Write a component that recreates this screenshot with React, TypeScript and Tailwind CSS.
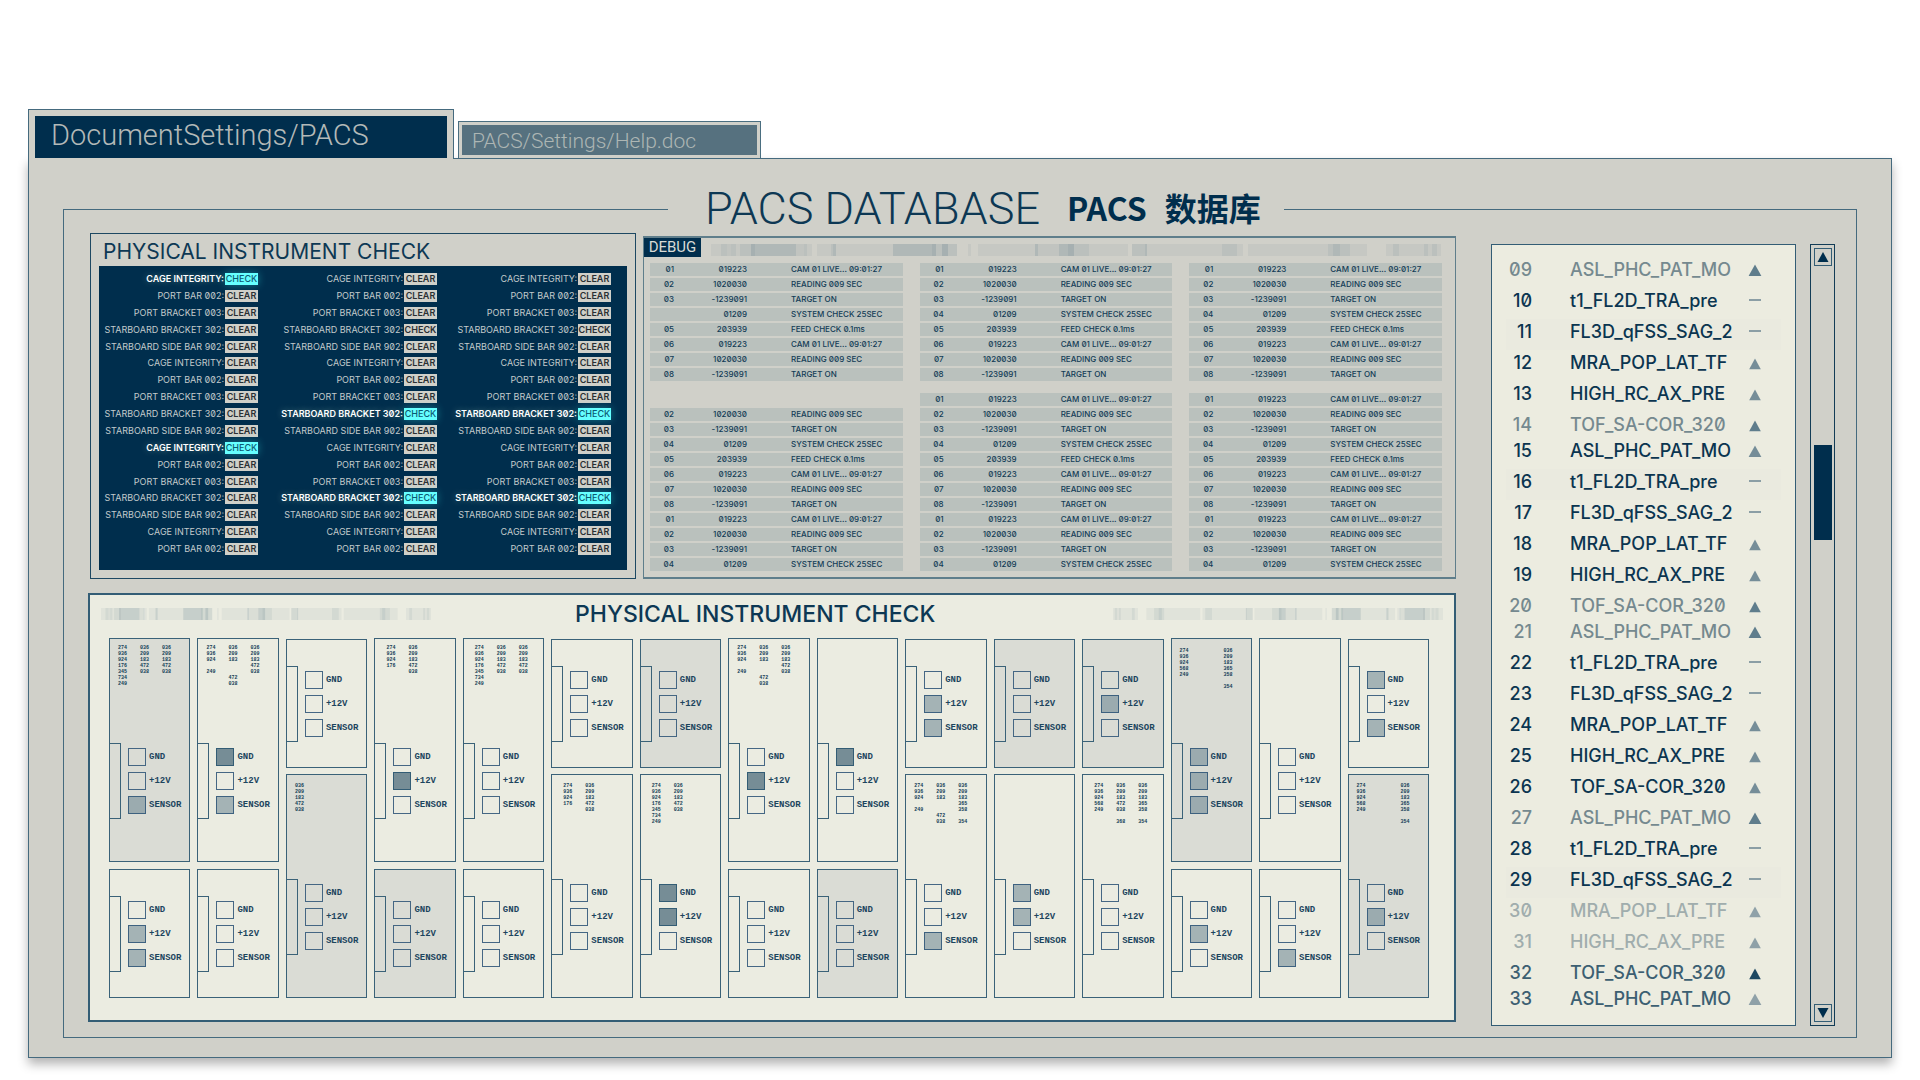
import React from "react";

const INTER = "font-['Inter',sans-serif]";

/* ---------- barcode strip ---------- */

type Bar = [start: number, end: number, shade: number];

const BARS: Bar[] = [
  [0, 10, 1], [10, 16, 3], [16, 20, 2], [20, 25, 3], [25, 29, 1],
  [29, 40, 3], [40, 44, 5], [44, 85, 4], [85, 93, 2], [93, 96, 3], [96, 101, 1],
  [106, 120, 1], [120, 122, 3], [122, 125, 4], [125, 182, 1],
  [182, 221, 4], [221, 225, 5], [225, 231, 3], [231, 237, 5], [237, 246, 3],
  [257, 260, 1], [267, 324, 1], [324, 327, 4], [327, 348, 2], [348, 357, 4],
  [357, 363, 5], [363, 378, 3], [378, 417, 1],
  [421, 434, 3], [434, 436, 4], [436, 511, 1], [511, 526, 3], [526, 532, 1],
  [537, 617, 1], [617, 622, 3], [622, 629, 4], [629, 639, 3], [639, 656, 1],
  [675, 682, 1], [682, 688, 3], [688, 713, 1], [713, 717, 3], [717, 721, 1],
  [721, 726, 3], [726, 730, 1],
];

const SHADE = [0, 0.05, 0.08, 0.11, 0.17, 0.22];

function Barcode({ className, mirrored }: { className: string; mirrored?: boolean }) {
  return (
    <svg viewBox="0 0 730 12" preserveAspectRatio="none" aria-hidden="true" className={className}>
      {BARS.map(([a, b, s]) => (
        <rect key={a} x={mirrored ? 730 - b : a} y="0" width={b - a} height="12" fill="#14405c" opacity={SHADE[s]} />
      ))}
    </svg>
  );
}

/* ---------- instrument check table ---------- */

const CHECKS = ["CAGE INTEGRITY:", "PORT BAR 002:", "PORT BRACKET 003:", "STARBOARD BRACKET 302:", "STARBOARD SIDE BAR 902:"];

function CheckColumn({ alerts, checks }: { alerts: number[]; checks: number[] }) {
  return (
    <ul className="flex flex-col justify-between">
      {Array.from({ length: 17 }, (_, i) => {
        const alert = alerts.includes(i);
        return (
          <li key={i} className="flex items-center justify-end gap-px whitespace-nowrap">
            <span
              className={
                alert
                  ? "font-semibold text-white [text-shadow:0_0_6px_rgba(200,230,200,0.4)]"
                  : "text-[#c3cbcc]"
              }
            >
              {CHECKS[i % 5]}
            </span>
            <span
              className={
                alert
                  ? "w-[33px] bg-[#66ffff] text-center font-medium text-[#0c5a72] shadow-[0_0_8px_rgba(60,255,255,0.35)]"
                  : "w-[33px] bg-[#d0d0c9] text-center font-semibold text-[#2a2f33]"
              }
            >
              {alert || checks.includes(i) ? "CHECK" : "CLEAR"}
            </span>
          </li>
        );
      })}
    </ul>
  );
}

function InstrumentSummary() {
  return (
    <section className="flex w-[546px] flex-none flex-col border border-[#1d4862] px-2 pb-2">
      <h2 className={`${INTER} pt-1 pl-1 text-[21px] leading-7 text-[#0d3854]`}>PHYSICAL INSTRUMENT CHECK</h2>
      <div
        className={`${INTER} grid flex-1 grid-cols-[159px_179px_174px] bg-[#002e4d] pt-[7px] pb-[15px] text-[9px] leading-3 [font-feature-settings:'zero']`}
      >
        <CheckColumn alerts={[0, 10]} checks={[]} />
        <CheckColumn alerts={[8, 13]} checks={[3]} />
        <CheckColumn alerts={[8, 13]} checks={[3]} />
      </div>
    </section>
  );
}

/* ---------- debug log ---------- */

const LOG: [string, string][] = [
  ["019223", "CAM 01 LIVE... 09:01:27"],
  ["1020030", "READING 009 SEC"],
  ["-1239091", "TARGET ON"],
  ["01209", "SYSTEM CHECK 25SEC"],
  ["203939", "FEED CHECK 0.1ms"],
  ["019223", "CAM 01 LIVE... 09:01:27"],
  ["1020030", "READING 009 SEC"],
  ["-1239091", "TARGET ON"],
];

function DebugRow({ index, numbered = true }: { index: number; numbered?: boolean }) {
  const [value, message] = LOG[index];
  return (
    <tr className="h-[13px] bg-[#bac1bd]">
      <td className="w-6 p-0 text-right">{numbered ? `0${index + 1}` : ""}</td>
      <td className="w-[73px] p-0 text-right">{value}</td>
      <td className="p-0 pl-11">{message}</td>
    </tr>
  );
}

function DebugTable({ gaps }: { gaps?: boolean }) {
  return (
    <table className="w-full table-fixed border-separate border-spacing-x-0 border-spacing-y-[2px] text-left whitespace-nowrap">
      <tbody>
        {LOG.map((_, i) => (
          <DebugRow key={i} index={i} numbered={!(gaps && i === 3)} />
        ))}
        <tr className="h-2">
          <td colSpan={3} className="p-0" />
        </tr>
        {LOG.map((_, i) =>
          gaps && i === 0 ? (
            <tr key={i} className="h-[13px]">
              <td colSpan={3} className="p-0" />
            </tr>
          ) : (
            <DebugRow key={i} index={i} />
          ),
        )}
        {LOG.slice(0, 4).map((_, i) => (
          <DebugRow key={i} index={i} />
        ))}
      </tbody>
    </table>
  );
}

function DebugPanel() {
  return (
    <section className="mt-[3px] flex-1 border-x border-y-2 border-[#5f7e8b] pb-1">
      <div className="flex items-start gap-2.5">
        <h2 className="w-[57px] flex-none bg-[#002e4d] text-center font-['Roboto',sans-serif] text-[15px] leading-[19px] text-[#d8dbd6]">
          DEBUG
        </h2>
        <Barcode className="mt-1.5 mr-3.5 h-3 min-w-0 flex-1" />
      </div>
      <div className="mt-1 mr-[13px] ml-1.5 grid grid-cols-3 gap-x-[17px] font-['Inter',sans-serif] text-[8px] leading-[13px] font-medium text-[#123c56] [font-feature-settings:'zero']">
        <DebugTable gaps />
        <DebugTable />
        <DebugTable />
      </div>
    </section>
  );
}

/* ---------- module rack ---------- */

type Level = 0 | 1 | 2;
type Leds = [Level, Level, Level];

interface Module {
  leds: Leds;
  shaded?: boolean;
  codes?: string[][];
  inset?: "a" | "b" | "c";
}

interface Slot {
  tallFirst: boolean;
  tall: Module;
  short: Module;
}

const A7 = ["274", "936", "924", "176", "345", "734", "249"];
const A4 = ["274", "936", "924", "176"];
const AG = ["274", "936", "924", "", "249"];
const A5 = ["274", "936", "924", "568", "249"];
const B5 = ["036", "209", "183", "472", "038"];
const BG = ["036", "209", "183", "", "", "472", "038"];
const B6 = ["036", "209", "183", "472", "038", "", "368"];
const C6 = ["036", "209", "183", "365", "358", "", "354"];

const SLOTS: Slot[] = [
  { tallFirst: true, tall: { leds: [0, 0, 1], shaded: true, codes: [A7, B5, B5], inset: "a" }, short: { leds: [0, 1, 1] } },
  { tallFirst: true, tall: { leds: [2, 0, 1], codes: [AG, BG, B5], inset: "a" }, short: { leds: [0, 0, 0] } },
  { tallFirst: false, short: { leds: [0, 0, 0] }, tall: { leds: [0, 0, 0], shaded: true, codes: [B5], inset: "a" } },
  { tallFirst: true, tall: { leds: [0, 2, 0], codes: [A4, B5], inset: "b" }, short: { leds: [0, 0, 0], shaded: true } },
  { tallFirst: true, tall: { leds: [0, 0, 0], codes: [A7, B5, B5], inset: "b" }, short: { leds: [0, 0, 0] } },
  { tallFirst: false, short: { leds: [0, 0, 0] }, tall: { leds: [0, 0, 0], codes: [A4, B5], inset: "b" } },
  { tallFirst: false, short: { leds: [0, 0, 0], shaded: true }, tall: { leds: [2, 2, 0], codes: [A7, B5], inset: "b" } },
  { tallFirst: true, tall: { leds: [0, 2, 0], codes: [AG, BG, B5], inset: "a" }, short: { leds: [0, 0, 0] } },
  { tallFirst: true, tall: { leds: [2, 0, 0] }, short: { leds: [0, 0, 0], shaded: true } },
  { tallFirst: false, short: { leds: [0, 1, 1] }, tall: { leds: [0, 0, 1], codes: [AG, BG, C6], inset: "a" } },
  { tallFirst: false, short: { leds: [0, 0, 0], shaded: true }, tall: { leds: [1, 1, 0] } },
  { tallFirst: false, short: { leds: [0, 1, 0], shaded: true }, tall: { leds: [0, 0, 0], codes: [A5, B6, C6], inset: "b" } },
  { tallFirst: true, tall: { leds: [1, 1, 1], shaded: true, codes: [A5, [], C6], inset: "c" }, short: { leds: [0, 1, 0] } },
  { tallFirst: true, tall: { leds: [0, 0, 0] }, short: { leds: [0, 0, 1] } },
  { tallFirst: false, short: { leds: [1, 0, 1] }, tall: { leds: [0, 1, 0], shaded: true, codes: [A5, [], C6], inset: "a" } },
];

const LED_NAMES = ["GND", "+12V", "SENSOR"];
const LED_CLASS = [
  "size-[18px] flex-none appearance-none border border-[#33597a]/90",
  "size-[18px] flex-none appearance-none border border-[#33597a]/90 checked:bg-[#4d6f80]/45",
  "size-[18px] flex-none appearance-none border border-[#335d75] checked:bg-[#768d96]",
];
const INSET = { a: "pl-2", b: "pl-[11px]", c: "pl-2 pt-[3px]" };

function ModuleCard({ module, tall, low }: { module: Module; tall?: boolean; low?: boolean }) {
  return (
    <div
      className={`flex flex-col justify-end border border-[#3a6278] ${tall ? "h-56 pb-[42px]" : "h-[129px] pb-[25px]"} ${
        module.shaded ? "bg-[#dadcd5]" : ""
      }`}
    >
      {module.codes && (
        <div
          className={`mb-auto grid grid-cols-[22px_22px_1fr] ${low ? "pt-2" : "pt-1.5"} font-['Liberation_Mono',monospace] text-[5px] leading-[6px] font-bold text-[#123c56]`}
        >
          {module.codes.map((column, c) => (
            <div key={c} className={INSET[module.inset ?? "a"]}>
              {column.map((code, r) => (
                <div key={r} className="h-1.5">
                  {code}
                </div>
              ))}
            </div>
          ))}
        </div>
      )}
      <div className="flex gap-[7px]">
        <div className="-ml-px h-[76px] w-3 flex-none border border-[#3a6278]" />
        <div className="flex flex-col justify-center gap-1.5">
          {LED_NAMES.map((name, i) => (
            <label
              key={name}
              className="flex items-center gap-[3px] font-['Liberation_Mono',monospace] text-[9px] leading-[18px] font-bold text-[#1c455e]"
            >
              <input type="checkbox" defaultChecked={module.leds[i] > 0} className={LED_CLASS[module.leds[i]]} />
              {name}
            </label>
          ))}
        </div>
      </div>
    </div>
  );
}

function ModuleRack() {
  return (
    <section className="mt-3.5 border-2 border-[#335d75] bg-[#ebece1] px-[11px] pb-[22px]">
      <div className="flex h-[43px] items-center pb-1.5">
        <Barcode className="h-3 w-[330px] flex-none" />
        <h2 className={`${INTER} ml-36 text-[23px] leading-8 font-medium text-[#0d3854]`}>PHYSICAL INSTRUMENT CHECK</h2>
        <Barcode className="ml-auto h-3 w-[330px] flex-none" mirrored />
      </div>
      <div className="mr-3.5 ml-2 grid grid-cols-15 gap-x-[7px]">
        {SLOTS.map((slot, i) =>
          slot.tallFirst ? (
            <div key={i} className="flex flex-col gap-[7px]">
              <ModuleCard module={slot.tall} tall />
              <ModuleCard module={slot.short} />
            </div>
          ) : (
            <div key={i} className="flex flex-col gap-1.5 pt-px">
              <ModuleCard module={slot.short} />
              <ModuleCard module={slot.tall} tall low />
            </div>
          ),
        )}
      </div>
    </section>
  );
}

/* ---------- scan list ---------- */

const SCANS = ["ASL_PHC_PAT_MO", "t1_FL2D_TRA_pre", "FL3D_qFSS_SAG_2", "MRA_POP_LAT_TF", "HIGH_RC_AX_PRE", "TOF_SA-COR_320"];
const DIM = [9, 14, 20, 21, 27];
const FAINT = [30, 31];
const SOFT = [32, 33];
const HIGHLIGHT = [11, 16, 29];

function Trend({ n }: { n: number }) {
  const kind = (n - 9) % 6;
  if (kind === 1 || kind === 2) {
    return (
      <svg viewBox="0 0 14 14" aria-hidden="true" className="mx-auto size-3.5">
        <rect x="1" y="5" width="12" height="2" fill="#8b9ea5" />
      </svg>
    );
  }
  const fill = n === 32 ? "#1d4862" : DIM.includes(n) ? "#5f7d8c" : FAINT.includes(n) || n === 33 ? "#8fa1a8" : "#758d98";
  return (
    <svg viewBox="0 0 14 14" aria-hidden="true" className="mx-auto size-3.5">
      <path d={kind === 0 ? "M7 1.5 13.4 13H.6Z" : "M7 2.5 12.8 13.2H1.2Z"} fill={fill} />
    </svg>
  );
}

function ScanRow({ n, last }: { n: number; last: boolean }) {
  const tone = DIM.includes(n)
    ? "text-[#75898f]"
    : FAINT.includes(n)
      ? "text-[#a0adad]"
      : SOFT.includes(n)
        ? "text-[#3c5f72]"
        : "text-[#0b3550]";
  const fill = HIGHLIGHT.includes(n) ? "bg-[#eaeadf]" : "";
  return (
    <tr className={`${tone} ${last ? "h-[26px]" : "h-[31px]"} align-top`}>
      <td className={`w-[26px] p-0 text-right ${fill}`}>{String(n).padStart(2, "0")}</td>
      <td className={`p-0 pl-[38px] ${fill}`}>{SCANS[(n - 9) % 6]}</td>
      <td className={`w-10 p-0 pt-1.5 pr-3 ${fill}`}>
        <Trend n={n} />
      </td>
    </tr>
  );
}

function ScanList() {
  return (
    <section className="mt-[11px] border border-[#335d75] bg-[#ecece0] px-3.5 pt-3">
      <table
        className={`${INTER} w-full table-fixed border-collapse text-left text-[18px] leading-[26px] font-medium whitespace-nowrap [font-feature-settings:'zero']`}
      >
        <tbody>
          {Array.from({ length: 25 }, (_, i) => (
            <ScanRow key={i} n={i + 9} last={i % 6 === 5 && i !== 17} />
          ))}
        </tbody>
      </table>
    </section>
  );
}

function Scrollbar() {
  return (
    <div className="mt-[11px] ml-3.5 flex flex-col items-center border border-[#123c56] py-[3px]">
      <button type="button" aria-label="Scroll up" className="flex size-[18px] items-center justify-center border border-[#335d75]">
        <svg viewBox="0 0 14 14" aria-hidden="true" className="size-3.5">
          <path d="M7 2 12.5 12H1.5Z" fill="#002e4d" />
        </svg>
      </button>
      <div className="mt-[179px] h-[95px] w-[18px] bg-[#002e4d]" />
      <button
        type="button"
        aria-label="Scroll down"
        className="mt-auto flex size-[18px] items-center justify-center border border-[#335d75]"
      >
        <svg viewBox="0 0 14 14" aria-hidden="true" className="size-3.5">
          <path d="M7 12 1.5 2H12.5Z" fill="#002e4d" />
        </svg>
      </button>
    </div>
  );
}

/* ---------- window ---------- */

export default function App() {
  return (
    <div className="min-h-screen bg-white px-7 pt-[109px] pb-[23px] font-['Roboto',sans-serif]">
      <div role="tablist" className="flex items-end">
        <div className="relative -mb-px w-[426px] border border-b-0 border-[#456a7e] bg-[#d0d0c9] px-1.5 pt-1.5">
          <button
            type="button"
            role="tab"
            aria-selected="true"
            className="mb-px block h-[42px] w-full bg-[#002e4d] pb-1 pl-4 text-left text-[29px] leading-[38px] font-light text-[#b3b9b8]"
          >
            DocumentSettings/PACS
          </button>
        </div>
        <div className="ml-1 w-[303px] border border-b-0 border-[#4a6e80] bg-[#d0d0c9] p-[3px]">
          <button
            type="button"
            role="tab"
            aria-selected="false"
            className="block w-full bg-[#56717f] pt-0.5 pl-2.5 text-left text-[21px] leading-7 font-light text-[#adb6b4]"
          >
            PACS/Settings/Help.doc
          </button>
        </div>
      </div>

      <main className="border border-[#456a7e] bg-[#d0d0c9] px-[34px] pt-[26px] pb-[19px] shadow-[0_6px_10px_rgba(0,0,0,0.3)]">
        <header className="flex h-12 items-center text-[#0d3854]">
          <div className="h-6 w-[605px] flex-none self-end border-t border-l border-[#456a7e]" />
          <h1 className="ml-[37px] flex items-center gap-[27px] whitespace-nowrap">
            <span className="text-[45px] leading-[48px] font-light">PACS DATABASE</span>
            <span
              lang="zh"
              className="flex gap-[18px] pb-1 font-['Noto_Sans_CJK_SC',sans-serif] text-[32px] leading-[44px] font-bold text-[#002e4d]"
            >
              <span>PACS</span>
              <span>数据库</span>
            </span>
          </h1>
          <div className="ml-[23px] h-6 flex-1 self-end border-t border-r border-[#456a7e]" />
        </header>

        <div className="grid grid-cols-[minmax(0,1fr)_305px_39px] border-x border-b border-[#456a7e] pr-[21px] pb-[11px] pl-6">
          <div className="mr-[35px] mb-1">
            <div className="flex min-h-[346px] gap-[7px] pl-0.5">
              <InstrumentSummary />
              <DebugPanel />
            </div>
            <ModuleRack />
          </div>
          <ScanList />
          <Scrollbar />
        </div>
      </main>
    </div>
  );
}
